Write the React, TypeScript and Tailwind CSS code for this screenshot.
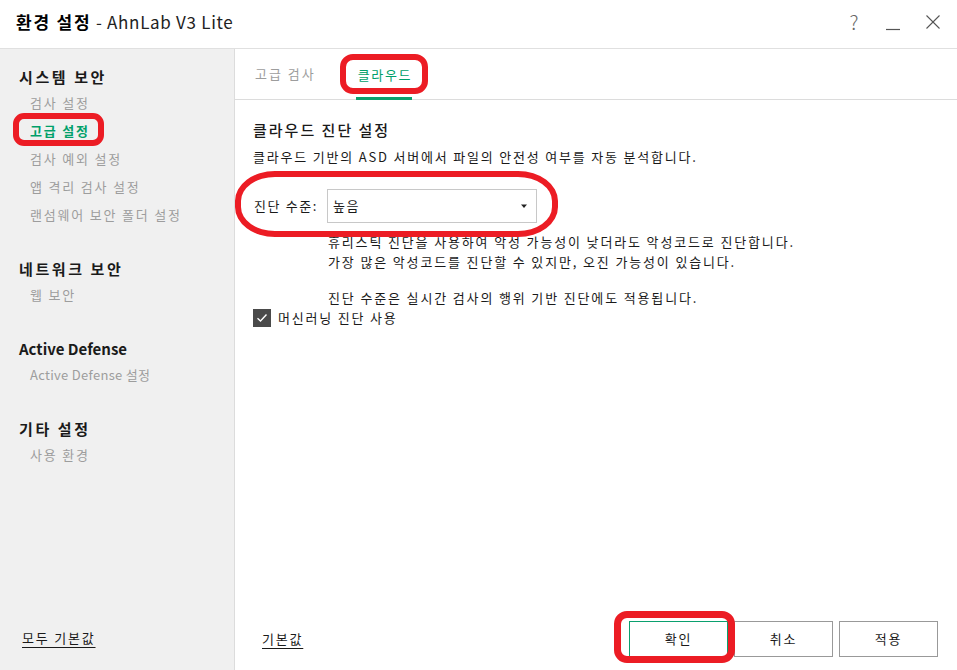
import React from "react";

const font = { fontFamily: '"Noto Sans CJK KR", "Noto Sans", sans-serif' };

function Group({ title, items, first, latinTitle }: { title: string; items: { label: string; active?: boolean; latin?: boolean }[]; first?: boolean; latinTitle?: boolean }) {
  return (
    <div className={first ? "" : "mt-[30px]"}>
      <div className={"pl-[19px] text-[15px] leading-[20px] font-bold text-[#1a1a1a] " + (latinTitle ? "tracking-[0px]" : "tracking-[2.6px]")}>{title}</div>
      <div className="mt-[2px]">
        {items.map((it) => (
          <div
            key={it.label}
            className={
              "pl-[30px] text-[13px] leading-[28px] " +
              (it.latin ? "tracking-[0.3px] " : "tracking-[1.8px] ") +
              (it.active ? "text-[#00a06a] font-bold" : "text-[#9d9d9d]")
            }
          >
            {it.label}
          </div>
        ))}
      </div>
    </div>
  );
}

export default function App() {
  return (
    <div className="relative w-[957px] h-[670px] bg-white flex flex-col overflow-hidden" style={font}>
      {/* Title bar */}
      <div className="h-[49px] border-b border-[#e0e0e0] flex items-center justify-between pl-[16px] pr-[16px] shrink-0 pb-[4px]">
        <div className="text-[17px] leading-[24px] text-black">
          <span className="font-bold tracking-[1.8px]">환경 설정</span>
          <span className="text-[#222] tracking-[0.7px]"> - AhnLab V3 Lite</span>
        </div>
        <div className="flex items-center">
          <span className="text-[20px] leading-[24px] text-[#666] font-light w-[14px] text-center mr-[24px]">?</span>
          <svg width="16" height="20" viewBox="0 0 16 20" className="mr-[24px]">
            <line x1="1" y1="17.5" x2="15" y2="17.5" stroke="#555" strokeWidth="1.2" />
          </svg>
          <svg width="16" height="16" viewBox="0 0 16 16">
            <line x1="1.5" y1="1.5" x2="14.5" y2="14.5" stroke="#555" strokeWidth="1.1" />
            <line x1="14.5" y1="1.5" x2="1.5" y2="14.5" stroke="#555" strokeWidth="1.1" />
          </svg>
        </div>
      </div>

      <div className="flex flex-1 min-h-0">
        {/* Sidebar */}
        <div className="w-[235px] shrink-0 bg-[#f0f0f0] border-r border-[#dcdcdc] flex flex-col pt-[18px] pb-[22px]">
          <Group
            first
            title="시스템 보안"
            items={[
              { label: "검사 설정" },
              { label: "고급 설정", active: true },
              { label: "검사 예외 설정" },
              { label: "앱 격리 검사 설정" },
              { label: "랜섬웨어 보안 폴더 설정" },
            ]}
          />
          <Group title="네트워크 보안" items={[{ label: "웹 보안" }]} />
          <Group latinTitle title="Active Defense" items={[{ label: "Active Defense 설정", latin: true }]} />
          <Group title="기타 설정" items={[{ label: "사용 환경" }]} />
          <div className="mt-auto pl-[22px] text-[13px] leading-[20px] text-[#1a1a1a] underline underline-offset-[4px] tracking-[1.8px]">
            모두 기본값
          </div>
        </div>

        {/* Main */}
        <div className="flex-1 flex flex-col min-w-0">
          {/* Tabs */}
          <div className="h-[51px] border-b border-[#dcdcdc] flex items-end pl-[20px] shrink-0">
            <div className="h-full flex items-center border-b-[3px] border-transparent text-[13px] text-[#9d9d9d] pt-[3px] tracking-[2px]">
              고급 검사
            </div>
            <div className="h-full flex items-center border-b-[3px] border-[#0aa06e] text-[13px] text-[#00a06a] ml-[40px] pl-[2px] pr-[0px] pt-[3px] mb-[-1px] tracking-[1.6px]">
              클라우드
            </div>
          </div>

          {/* Content */}
          <div className="flex-1 flex flex-col pl-[18px] pt-[20px]">
            <div className="text-[15px] leading-[20px] font-medium text-[#1a1a1a] tracking-[2px]">클라우드 진단 설정</div>
            <div className="mt-[8px] text-[13px] leading-[18px] text-[#1a1a1a] tracking-[1.8px]">
              클라우드 기반의 ASD 서버에서 파일의 안전성 여부를 자동 분석합니다.
            </div>
            <div className="mt-[23px] flex items-center">
              <div className="w-[74px] pl-[1px] text-[13px] text-[#1a1a1a] tracking-[1.6px]">진단 수준:</div>
              <div className="w-[210px] h-[34px] border border-[#c8c8c8] flex items-center justify-between pl-[5px] pr-[8px] text-[13px] text-[#1a1a1a] tracking-[1.5px]">
                <span>높음</span>
                <svg width="8" height="5" viewBox="0 0 8 5">
                  <path d="M1 0.5 L7 0.5 L4 4 Z" fill="#222" />
                </svg>
              </div>
            </div>
            <div className="pl-[75px] mt-[9px] text-[13px] leading-[20px] text-[#1a1a1a] tracking-[1.85px]">
              <div>휴리스틱 진단을 사용하여 악성 가능성이 낮더라도 악성코드로 진단합니다.</div>
              <div>가장 많은 악성코드를 진단할 수 있지만, 오진 가능성이 있습니다.</div>
              <div className="mt-[16px]">진단 수준은 실시간 검사의 행위 기반 진단에도 적용됩니다.</div>
            </div>
            <div className="mt-[0px] flex items-center">
              <div className="w-[18px] h-[18px] bg-[#4a4a4a] flex items-center justify-center">
                <svg width="12" height="10" viewBox="0 0 12 10">
                  <path d="M1.5 5.2 L4.5 8 L10.5 1.5" stroke="#fff" strokeWidth="1.4" fill="none" />
                </svg>
              </div>
              <span className="ml-[7px] text-[13px] leading-[20px] text-[#1a1a1a] tracking-[1.8px]">머신러닝 진단 사용</span>
            </div>

            {/* Bottom bar */}
            <div className="mt-auto flex items-center justify-between pl-[9px] pr-[19px] pb-[13px]">
              <div className="text-[13px] leading-[20px] text-[#1a1a1a] underline underline-offset-[4px] tracking-[1.8px]">기본값</div>
              <div className="flex gap-[6px]">
                <div className="w-[99px] h-[36px] border border-[#0aa06e] flex items-center justify-center text-[13px] text-[#1a1a1a] tracking-[1.8px]">확인</div>
                <div className="w-[99px] h-[36px] border border-[#999] flex items-center justify-center text-[13px] text-[#1a1a1a] tracking-[1.8px]">취소</div>
                <div className="w-[99px] h-[36px] border border-[#999] flex items-center justify-center text-[13px] text-[#1a1a1a] tracking-[1.8px]">적용</div>
              </div>
            </div>
          </div>
        </div>
      </div>

      {/* Red annotations */}
      <div className="absolute left-[13px] top-[113px] w-[91px] h-[33px] border-[6px] border-[#ec1c24] rounded-[11px] pointer-events-none" />
      <div className="absolute left-[340px] top-[54px] w-[88px] h-[40px] border-[6px] border-[#ec1c24] rounded-[13px] pointer-events-none" />
      <div className="absolute left-[235px] top-[171px] w-[323px] h-[66px] border-[6px] border-[#ec1c24] rounded-[40px/30px] pointer-events-none" />
      <div className="absolute left-[614px] top-[611px] w-[121px] h-[52px] border-[7px] border-[#ec1c24] rounded-[13px] pointer-events-none" />
    </div>
  );
}
